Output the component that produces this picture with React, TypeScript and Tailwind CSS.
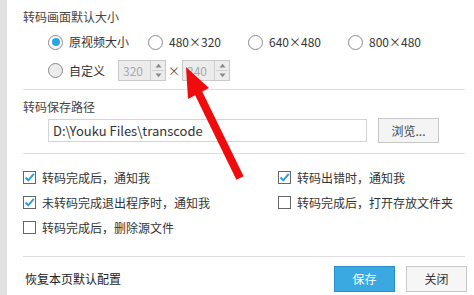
import React from "react";

const font = { fontFamily: '"Noto Sans CJK SC", "Microsoft YaHei", sans-serif' };

function Radio({ checked, gray }: { checked?: boolean; gray?: boolean }) {
  return (
    <span
      className={`relative inline-flex h-[15px] w-[15px] shrink-0 items-center justify-center rounded-full border border-[#8a8a8a] ${
        gray ? "bg-[#ececec]" : "bg-white"
      }`}
    >
      {checked && <span className="h-[8px] w-[8px] rounded-full bg-[#2aa4e8]" />}
    </span>
  );
}

function Check({ checked }: { checked?: boolean }) {
  return (
    <span className="relative inline-flex h-[13px] w-[13px] shrink-0 items-center justify-center border border-[#666] bg-white">
      {checked && (
        <svg width="11" height="11" viewBox="0 0 11 11" className="absolute">
          <path d="M1.5 5.5 L4.3 8.3 L9.8 1.8" fill="none" stroke="#2f9be0" strokeWidth="2" />
        </svg>
      )}
    </span>
  );
}

function Spin({ value }: { value: string }) {
  return (
    <div className="flex h-[21px] w-[48px] border border-[#c9c9c9] bg-[#ececec]">
      <div className="flex flex-1 items-center pl-[4px] text-[12px] text-[#a8a8a8]">{value}</div>
      <div className="flex w-[15px] flex-col items-center justify-center border-l border-[#d0d0d0]">
        <svg width="7" height="5" viewBox="0 0 7 5">
          <path d="M0.5 4.5 L3.5 0.8 L6.5 4.5 Z" fill="#8a8a8a" />
        </svg>
        <div className="my-[2px] h-px w-[12px] bg-[#d0d0d0]" />
        <svg width="7" height="5" viewBox="0 0 7 5">
          <path d="M0.5 0.5 L3.5 4.2 L6.5 0.5 Z" fill="#8a8a8a" />
        </svg>
      </div>
    </div>
  );
}

export default function App() {
  return (
    <div className="relative flex h-[295px] w-[474px] overflow-hidden bg-white text-[#333]" style={font}>
      <div className="w-[7px] shrink-0 bg-[#e1e1e1]" />
      <div className="flex flex-1 flex-col pl-[16px] pr-[9px]">
        <div className="mt-[9px] h-[16px] text-[12px] leading-[16px] text-[#444]">转码画面默认大小</div>

        <div className="mt-[7px] grid h-[20px] grid-cols-[100px_100px_100px_100px] items-center pl-[25px] text-[12px]">
          <div className="flex items-center gap-[6px]">
            <Radio checked />
            <span>原视频大小</span>
          </div>
          <div className="flex items-center gap-[6px]">
            <Radio />
            <span>480×320</span>
          </div>
          <div className="flex items-center gap-[6px]">
            <Radio />
            <span>640×480</span>
          </div>
          <div className="flex items-center gap-[6px]">
            <Radio />
            <span>800×480</span>
          </div>
        </div>

        <div className="mt-[8px] flex h-[21px] items-center pl-[25px] text-[12px]">
          <Radio gray />
          <span className="ml-[6px] w-[49px]">自定义</span>
          <Spin value="320" />
          <span className="w-[16px] text-center text-[12px] text-[#555]">×</span>
          <Spin value="240" />
        </div>

        <div className="mt-[8px] h-px bg-[#dedede]" />

        <div className="mt-[9px] h-[16px] text-[12px] leading-[16px] text-[#444]">转码保存路径</div>

        <div className="mt-[3px] flex h-[25px] items-center pl-[25px]">
          <div className="flex h-[23px] w-[319px] items-center border border-[#d4d4d4] pl-[4px] text-[13px] text-[#333]">
            D:\Youku Files\transcode
          </div>
          <div className="ml-[11px] flex h-[25px] w-[61px] items-center justify-center border border-[#c8c8c8] bg-[#f4f4f4] text-[12px] text-[#444]">
            浏览...
          </div>
        </div>

        <div className="mt-[10px] h-px bg-[#dedede]" />

        <div className="mt-[11px] grid grid-cols-[255px_1fr] grid-rows-[25px_25px_25px] text-[12px]">
          <div className="flex items-center gap-[6px]">
            <Check checked />
            <span>转码完成后，通知我</span>
          </div>
          <div className="flex items-center gap-[6px]">
            <Check checked />
            <span>转码出错时，通知我</span>
          </div>
          <div className="flex items-center gap-[6px]">
            <Check checked />
            <span>未转码完成退出程序时，通知我</span>
          </div>
          <div className="flex items-center gap-[6px]">
            <Check />
            <span>转码完成后，打开存放文件夹</span>
          </div>
          <div className="flex items-center gap-[6px]">
            <Check />
            <span>转码完成后，删除源文件</span>
          </div>
          <div />
        </div>

        <div className="mt-[16px] h-px bg-[#dedede]" />

        <div className="mt-[9px] flex h-[26px] items-center">
          <span className="ml-[2px] text-[12px] text-[#222]">恢复本页默认配置</span>
          <div className="ml-auto flex gap-[11px]">
            <div className="flex h-[26px] w-[61px] items-center justify-center border border-[#2a8fcc] bg-[#3aa9e2] text-[12px] text-white">
              保存
            </div>
            <div className="mr-[-2px] flex h-[26px] w-[61px] items-center justify-center border border-[#c8c8c8] bg-[#f6f6f6] text-[12px] text-[#333]">
              关闭
            </div>
          </div>
        </div>
      </div>

      <svg className="pointer-events-none absolute left-0 top-0" width="474" height="295" viewBox="0 0 474 295">
        <line x1="198" y1="92" x2="240" y2="178" stroke="#ee0c0c" strokeWidth="8" />
        <polygon points="186,67 209,88 188,99" fill="#ee0c0c" />
      </svg>
    </div>
  );
}
